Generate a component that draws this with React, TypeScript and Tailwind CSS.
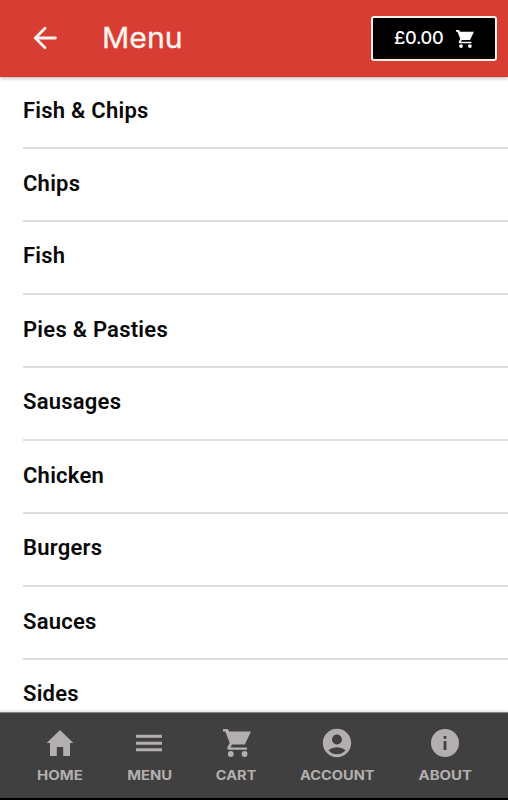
import React from "react";
import { MdAccountCircle } from "react-icons/md";

const categories = [
  "Fish & Chips", "Chips", "Fish", "Pies & Pasties", "Sausages",
  "Chicken", "Burgers", "Sauces", "Sides",
];

function BackArrow() {
  return (
    <svg viewBox="0 0 24 24" className="h-6 w-6 shrink-0" fill="none" stroke="#fff4ee" strokeWidth="2.8" strokeLinecap="round" strokeLinejoin="round">
      <path d="M12 2.3 L2.3 12 L12 21.7 M3 12 H22.4" />
    </svg>
  );
}

function CartIcon({ className }: { className: string }) {
  return (
    <svg viewBox="0 0 28 28" className={className} fill="currentColor">
      <path d="M0 0h4.8l1.5 2.6H28l-6.2 12.8H9l-1.6 3H24v2.3H6.2c-1.8 0-2.4-1.3-1.6-2.8l2.1-3.8L2.3 2.6H0z" />
      <circle cx="7.8" cy="25" r="2.9" />
      <circle cx="21.6" cy="25" r="2.9" />
    </svg>
  );
}

function HomeIcon() {
  return (
    <svg viewBox="0 0 28 28" className="h-7 w-7" fill="currentColor">
      <path d="M14 1 L27.3 14 H24 V27 H17.2 V18 H10.8 V27 H4 V14 H0.7 Z" />
    </svg>
  );
}

function MenuIcon() {
  return (
    <svg viewBox="0 0 26 18" className="h-[18px] w-[26px]" fill="currentColor">
      <path d="M0 .8h26v3H0zM0 7.7h26v3H0zM0 14.3h26v3H0z" />
    </svg>
  );
}

function InfoIcon() {
  return (
    <svg viewBox="0 0 28 28" className="h-7 w-7" fill="currentColor">
      <path fillRule="evenodd" d="M14 0a14 14 0 1 0 0 28a14 14 0 0 0 0-28ZM12.6 7h2.8v2.8h-2.8zM12.6 12h2.8v9h-2.8z" />
    </svg>
  );
}

const tabs = [
  { label: "HOME", width: "w-[45px]", scale: "scale-x-[1.15]", icon: <HomeIcon /> },
  { label: "MENU", width: "w-[47px]", scale: "scale-x-[1.14]", icon: <MenuIcon /> },
  { label: "CART", width: "w-[40px]", scale: "scale-x-[1.12]", icon: <CartIcon className="h-7 w-7 shrink-0" /> },
  { label: "ACCOUNT", width: "w-[74px]", scale: "scale-x-[1.12]", icon: <MdAccountCircle className="h-[34px] w-[34px] shrink-0" /> },
  { label: "ABOUT", width: "w-[54px]", scale: "scale-x-[1.15]", icon: <InfoIcon /> },
];

export default function App() {
  return (
    <div className="flex h-[800px] w-[508px] flex-col overflow-hidden bg-white font-['Roboto',sans-serif]">
      <header className="z-10 flex h-[77px] shrink-0 items-center border-b border-[#c83a30] bg-[#d83d33] pr-[11px] pl-[33px] shadow-[0_2px_3px_rgba(70,30,20,0.25)]">
        <BackArrow />
        <h1 className="ml-[45px] origin-left scale-x-[1.08] font-['Inter',sans-serif] text-[28px] leading-none font-normal text-[#fff4ee] [-webkit-text-stroke:0.3px_#fff4ee]">Menu</h1>
        <button className="mt-px ml-auto flex h-[45px] w-[126px] items-center rounded-[3px] border-2 border-[#fff0e8] bg-black pl-[19px] text-white">
          <span className="w-[50px] origin-left scale-x-[1.07] font-['Inter',sans-serif] text-[17px] leading-none font-medium tracking-[-0.3px]">£0.00</span>
          <CartIcon className="ml-[14px] h-[18px] w-[18px] shrink-0" />
        </button>
      </header>
      <main className="min-h-0 flex-1 overflow-hidden pl-[23px]">
        <ul className="-mt-px">
          {categories.map((name) => (
            <li key={name} className="flex h-[73px] items-center border-b-2 border-[#dedede] pb-[4px] text-[22px] font-semibold tracking-[0.24px] text-[#080808] first:pb-[3px] even:pb-[3px]">
              {name}
            </li>
          ))}
        </ul>
      </main>
      <nav className="z-10 flex h-[88px] shrink-0 justify-between border-t border-b-2 border-t-[#858585] border-b-black bg-[#404040] pr-[36px] pl-[37px] text-[#b4afaf] shadow-[0_-1px_3px_rgba(0,0,0,0.12)]">
        {tabs.map((tab) => (
          <div key={tab.label} className={"flex flex-col items-center pt-[13px] " + tab.width}>
            <div className="flex h-[34px] items-center justify-center">{tab.icon}</div>
            <span className={"mt-[7px] font-['Inter',sans-serif] text-[13px] leading-4 font-bold " + tab.scale}>{tab.label}</span>
          </div>
        ))}
      </nav>
    </div>
  );
}
